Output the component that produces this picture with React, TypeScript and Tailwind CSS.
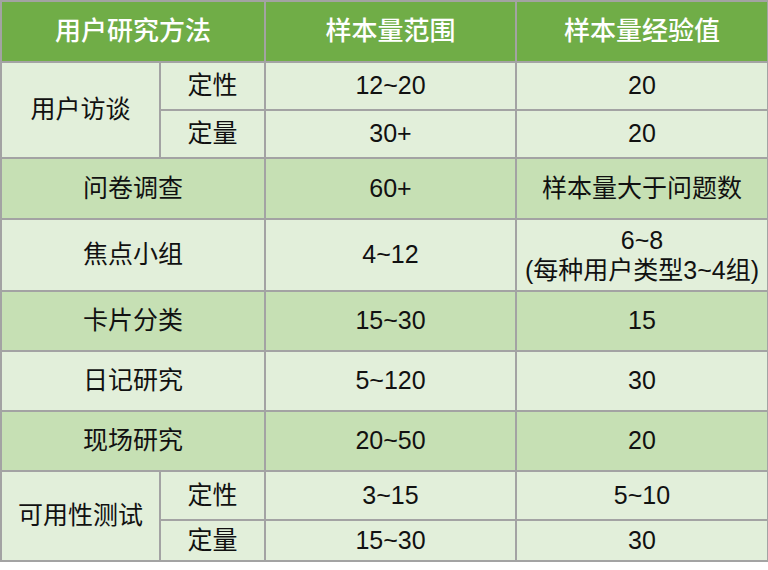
const light = "bg-[#e2efda]";
const mid = "bg-[#c6e0b4]";
const cell = "border-2 border-[#a3a3a3] text-center align-middle p-0";

export default function App() {
  return (
    <div className="w-[768px] h-[570px] bg-white font-['Liberation_Sans','Noto_Sans_CJK_SC',sans-serif] text-[25px] text-[#111] overflow-hidden">
      <table className="border-collapse table-fixed w-[767px] leading-[1.25]">
        <colgroup>
          <col className="w-[159px]" />
          <col className="w-[105px]" />
          <col className="w-[251px]" />
          <col className="w-[252px]" />
        </colgroup>
        <thead>
          <tr className="h-[61px] bg-[#70ad47] text-white font-medium text-[26px]">
            <th colSpan={2} className={`${cell} font-medium`}>用户研究方法</th>
            <th className={`${cell} font-medium`}>样本量范围</th>
            <th className={`${cell} font-medium`}>样本量经验值</th>
          </tr>
        </thead>
        <tbody>
          <tr className={`h-[48px] ${light}`}>
            <td rowSpan={2} className={cell}>用户访谈</td>
            <td className={cell}>定性</td>
            <td className={cell}>12~20</td>
            <td className={cell}>20</td>
          </tr>
          <tr className={`h-[48px] ${light}`}>
            <td className={cell}>定量</td>
            <td className={cell}>30+</td>
            <td className={cell}>20</td>
          </tr>
          <tr className={`h-[61px] ${mid}`}>
            <td colSpan={2} className={cell}>问卷调查</td>
            <td className={cell}>60+</td>
            <td className={cell}>样本量大于问题数</td>
          </tr>
          <tr className={`h-[72px] ${light}`}>
            <td colSpan={2} className={cell}>焦点小组</td>
            <td className={cell}>4~12</td>
            <td className={`${cell} leading-[30px]`}>
              6~8
              <br />
              (每种用户类型3~4组)
            </td>
          </tr>
          <tr className={`h-[60px] ${mid}`}>
            <td colSpan={2} className={cell}>卡片分类</td>
            <td className={cell}>15~30</td>
            <td className={cell}>15</td>
          </tr>
          <tr className={`h-[60px] ${light}`}>
            <td colSpan={2} className={cell}>日记研究</td>
            <td className={cell}>5~120</td>
            <td className={cell}>30</td>
          </tr>
          <tr className={`h-[60px] ${mid}`}>
            <td colSpan={2} className={cell}>现场研究</td>
            <td className={cell}>20~50</td>
            <td className={cell}>20</td>
          </tr>
          <tr className={`h-[49px] ${light}`}>
            <td rowSpan={2} className={cell}>可用性测试</td>
            <td className={cell}>定性</td>
            <td className={cell}>3~15</td>
            <td className={cell}>5~10</td>
          </tr>
          <tr className={`h-[41px] ${light}`}>
            <td className={cell}>定量</td>
            <td className={cell}>15~30</td>
            <td className={cell}>30</td>
          </tr>
        </tbody>
      </table>
    </div>
  );
}
